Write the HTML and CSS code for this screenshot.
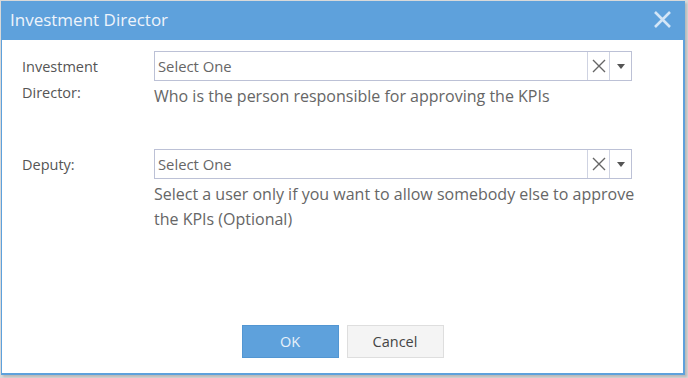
FILE: index.html
```html
<!DOCTYPE html>
<html lang="en">
<head>
  <meta charset="UTF-8">
  <title>Investment Director</title>
  <link rel="stylesheet" href="styles.css">
</head>
<body>
  <div class="dialog">
    <div class="dialog-title">
      <span>Investment Director</span>
      <span class="close">
        <svg width="17" height="17" viewBox="0 0 17 17"><path d="M1 1L16 16M16 1L1 16" stroke="#d4e6f7" stroke-width="2.6"/></svg>
      </span>
    </div>
    <div class="dialog-body">
      <div class="form-row">
        <label>Investment<br>Director:</label>
        <div class="field">
          <div class="select">
            <span class="placeholder">Select One</span>
            <span class="clear">
              <svg width="14" height="14" viewBox="0 0 14 14"><path d="M1 1L13 13M13 1L1 13" stroke="#666" stroke-width="1.4"/></svg>
            </span>
            <span class="arrow"></span>
          </div>
          <p class="help">Who is the person responsible for approving the KPIs</p>
        </div>
      </div>
      <div class="form-row deputy">
        <label>Deputy:</label>
        <div class="field">
          <div class="select">
            <span class="placeholder">Select One</span>
            <span class="clear">
              <svg width="14" height="14" viewBox="0 0 14 14"><path d="M1 1L13 13M13 1L1 13" stroke="#666" stroke-width="1.4"/></svg>
            </span>
            <span class="arrow"></span>
          </div>
          <p class="help">Select a user only if you want to allow somebody else to approve the KPIs (Optional)</p>
        </div>
      </div>
    </div>
    <div class="dialog-buttons">
      <button class="btn btn-ok">OK</button>
      <button class="btn btn-cancel">Cancel</button>
    </div>
  </div>
</body>
</html>
```

FILE: styles.css
```css
body {
  margin: 0;
  background: #d9d9d9;
  font-family: 'Open Sans', sans-serif;
  height: 378px;
  overflow: hidden;
}

.dialog {
  width: 681px;
  height: 372px;
  margin: 1px 0 0 1px;
  border: 2px solid #5ea1dc;
  border-top: 0;
  border-left-width: 1px;
  background: #fff;
  display: flex;
  flex-direction: column;
  box-shadow: 2px 2px 2px rgba(0, 0, 0, 0.15);
}

.dialog-title {
  height: 37px;
  background: #5ea1dc;
  color: #eef4fb;
  font-size: 17px;
  display: flex;
  align-items: center;
  justify-content: space-between;
  padding: 0 12px 2px 8px;
}

.close {
  display: flex;
}

.dialog-body {
  flex: 1;
  padding: 11px 0 0 20px;
}

.form-row {
  display: flex;
}

.form-row label {
  width: 132px;
  font-size: 14.5px;
  color: #555;
  line-height: 26px;
  padding-top: 3px;
}

.deputy {
  margin-top: 40px;
}

.field {
  width: 478px;
}

.select {
  height: 28px;
  border: 1px solid #bcc1d6;
  display: flex;
  align-items: center;
}

.placeholder {
  flex: 1;
  font-size: 14.8px;
  color: #666;
  padding-left: 3px;
}

.clear {
  width: 21px;
  height: 28px;
  border-left: 1px solid #cfd3e2;
  display: flex;
  align-items: center;
  justify-content: center;
}

.arrow {
  width: 21px;
  height: 28px;
  border-left: 1px solid #cfd3e2;
  position: relative;
}

.arrow::after {
  content: "";
  position: absolute;
  left: 7px;
  top: 12px;
  border-left: 4px solid transparent;
  border-right: 4px solid transparent;
  border-top: 5px solid #555;
}

.help {
  width: 500px;
  margin: 3px 0 0;
  font-size: 16px;
  line-height: 25px;
  color: #666;
}

.dialog-buttons {
  display: flex;
  justify-content: center;
  gap: 8px;
  padding: 0 0 15px 0;
}

.btn {
  width: 97px;
  height: 33px;
  font-family: 'Open Sans', sans-serif;
  font-size: 14.5px;
  cursor: pointer;
}

.btn-ok {
  background: #5ea1dc;
  border: 1px solid #5296d2;
  color: #e8f1fa;
}

.btn-cancel {
  background: #f4f4f4;
  border: 1px solid #dedede;
  color: #444;
}
```
